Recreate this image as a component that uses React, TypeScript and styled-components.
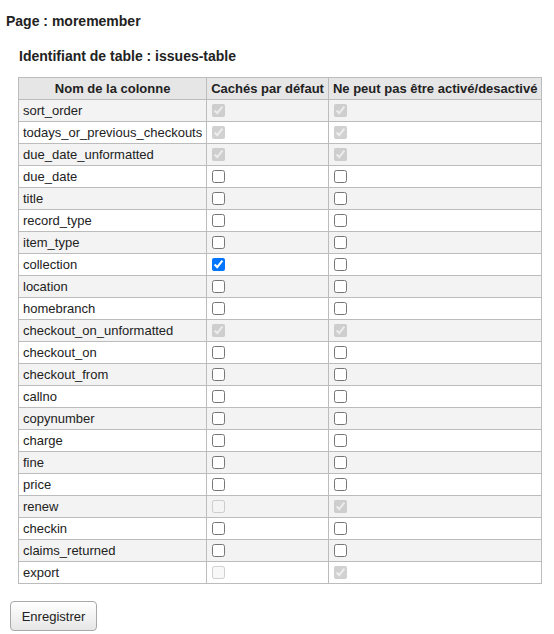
import React from "react";
import styled, { createGlobalStyle } from "styled-components";

const Global = createGlobalStyle`
  html, body { margin: 0; padding: 0; background: #fff; }
  body { font-family: "Liberation Sans", Arial, sans-serif; color: #222; }
`;

const Page = styled.div`
  padding: 13px 6px 0 6px;
`;

const PageTitle = styled.h3`
  margin: 0;
  font-size: 14px;
  font-weight: bold;
  line-height: 17px;
`;

const Section = styled.div`
  padding-left: 13px;
  margin-top: 18px;
`;

const TableTitle = styled.h4`
  margin: 0 0 12px 0;
  font-size: 14px;
  font-weight: bold;
  line-height: 17px;
`;

const Table = styled.table`
  border-collapse: collapse;
  margin-left: -1px;
  width: 524px;
  font-size: 13px;
`;

const Th = styled.th`
  background: #e6e6e6;
  border: 1px solid #bcbcbc;
  height: 21px;
  padding: 0 4px;
  font-weight: bold;
  text-align: center;
  white-space: nowrap;
`;

const Row = styled.tr<{ $alt: boolean }>`
  background: ${(p) => (p.$alt ? "#f3f3f3" : "#fff")};
`;

const Td = styled.td`
  border: 1px solid #bcbcbc;
  height: 21px;
  padding: 0 4px;
  vertical-align: middle;
  white-space: nowrap;
`;

const Check = styled.input`
  margin: 0 0 0 1px;
  width: 13px;
  height: 13px;
  vertical-align: middle;
  position: relative;
  top: -1px;
`;

const Actions = styled.div`
  padding: 17px 4px 0 4px;
`;

const Button = styled.button`
  font-family: "Liberation Sans", Arial, sans-serif;
  font-size: 13px;
  color: #222;
  height: 30px;
  width: 87px;
  border: 1px solid #a8a8a8;
  border-radius: 4px;
  background: linear-gradient(#ffffff, #e6e6e6);
  padding: 0;
`;

type Item = { name: string; hidden: [boolean, boolean]; locked: [boolean, boolean] };

// [checked, disabled]
const rows: Item[] = [
  { name: "sort_order", hidden: [true, true], locked: [true, true] },
  { name: "todays_or_previous_checkouts", hidden: [true, true], locked: [true, true] },
  { name: "due_date_unformatted", hidden: [true, true], locked: [true, true] },
  { name: "due_date", hidden: [false, false], locked: [false, false] },
  { name: "title", hidden: [false, false], locked: [false, false] },
  { name: "record_type", hidden: [false, false], locked: [false, false] },
  { name: "item_type", hidden: [false, false], locked: [false, false] },
  { name: "collection", hidden: [true, false], locked: [false, false] },
  { name: "location", hidden: [false, false], locked: [false, false] },
  { name: "homebranch", hidden: [false, false], locked: [false, false] },
  { name: "checkout_on_unformatted", hidden: [true, true], locked: [true, true] },
  { name: "checkout_on", hidden: [false, false], locked: [false, false] },
  { name: "checkout_from", hidden: [false, false], locked: [false, false] },
  { name: "callno", hidden: [false, false], locked: [false, false] },
  { name: "copynumber", hidden: [false, false], locked: [false, false] },
  { name: "charge", hidden: [false, false], locked: [false, false] },
  { name: "fine", hidden: [false, false], locked: [false, false] },
  { name: "price", hidden: [false, false], locked: [false, false] },
  { name: "renew", hidden: [false, true], locked: [true, true] },
  { name: "checkin", hidden: [false, false], locked: [false, false] },
  { name: "claims_returned", hidden: [false, false], locked: [false, false] },
  { name: "export", hidden: [false, true], locked: [true, true] },
];

export default function App() {
  return (
    <>
      <Global />
      <Page>
        <PageTitle>Page : moremember</PageTitle>
        <Section>
          <TableTitle>Identifiant de table : issues-table</TableTitle>
          <Table>
            <colgroup>
              <col style={{ width: 188 }} />
              <col style={{ width: 123 }} />
              <col />
            </colgroup>
            <thead>
              <tr>
                <Th>Nom de la colonne</Th>
                <Th>Cachés par défaut</Th>
                <Th>Ne peut pas être activé/desactivé</Th>
              </tr>
            </thead>
            <tbody>
              {rows.map((r, i) => (
                <Row key={r.name} $alt={i % 2 === 0}>
                  <Td>{r.name}</Td>
                  <Td>
                    <Check type="checkbox" defaultChecked={r.hidden[0]} disabled={r.hidden[1]} />
                  </Td>
                  <Td>
                    <Check type="checkbox" defaultChecked={r.locked[0]} disabled={r.locked[1]} />
                  </Td>
                </Row>
              ))}
            </tbody>
          </Table>
        </Section>
        <Actions>
          <Button type="button">Enregistrer</Button>
        </Actions>
      </Page>
    </>
  );
}
